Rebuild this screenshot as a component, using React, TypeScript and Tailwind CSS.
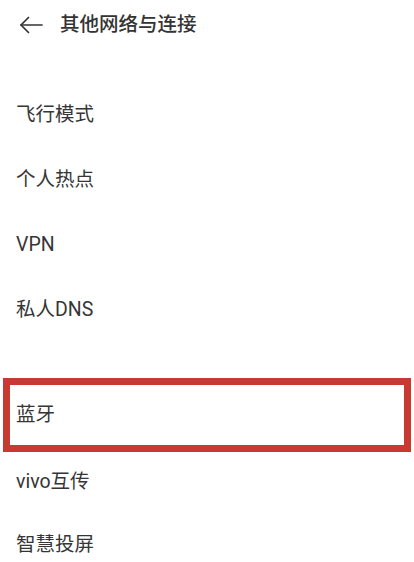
const font = { fontFamily: 'Roboto, "Noto Sans CJK SC", sans-serif' }

function Row({ label, h }: { label: string; h: string }) {
  return (
    <div className={`flex items-center pl-4 text-[19.5px] text-[#363636] ${h}`}>
      {label}
    </div>
  )
}

export default function App() {
  return (
    <div className="w-[414px] h-[562px] bg-white overflow-hidden" style={font}>
      <div className="flex items-center h-[50px] pl-[19px] gap-[17px]">
        <svg width="24" height="18" viewBox="0 0 24 18" fill="none" stroke="#333" strokeWidth="1.7" strokeLinecap="round" strokeLinejoin="round">
          <path d="M2 9H23" />
          <path d="M9.5 1.5L2 9l7.5 7.5" />
        </svg>
        <span className="text-[19.5px] font-medium text-[#333]">其他网络与连接</span>
      </div>

      <div className="pt-[32px]">
        <Row label="飞行模式" h="h-[65px]" />
        <Row label="个人热点" h="h-[65px]" />
        <Row label="VPN" h="h-[65px]" />
        <Row label="私人DNS" h="h-[65px]" />
      </div>

      <div className="mt-[36px] mx-[3px] h-[74px] border-[7px] border-[#c83a31] flex items-center pl-[6px] text-[19.5px] text-[#363636]">
        蓝牙
      </div>

      <Row label="vivo互传" h="h-[60px]" />
      <Row label="智慧投屏" h="h-[66px]" />
    </div>
  )
}
